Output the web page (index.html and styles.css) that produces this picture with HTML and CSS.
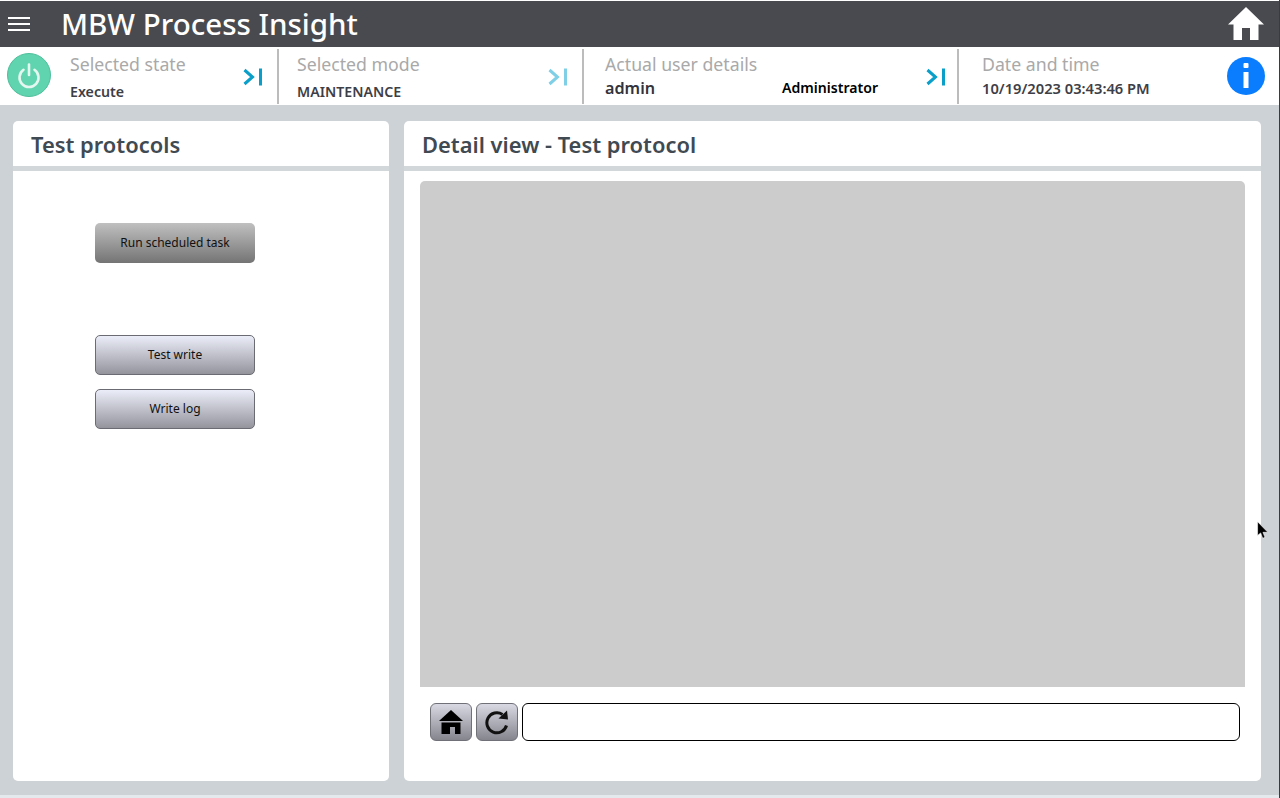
FILE: index.html
```html
<!DOCTYPE html>
<html lang="en">

<head>
    <meta charset="UTF-8">
    <title>MBW Process Insight</title>
    <link rel="stylesheet" href="styles.css">
</head>

<body>
    <div class="screen">
        <header class="topbar">
            <div class="burger"><span></span><span></span><span></span></div>
            <h1 class="app-title">MBW Process Insight</h1>
            <svg class="top-home" width="38" height="34" viewBox="0 0 38 34">
                <path fill="#fff" d="M19 0 L37 17.500 L31.500 17.500 L31.500 33 L23 33 L23 21 L15 21 L15 33 L6.500 33 L6.500 17.500 L1 17.500 Z" />
            </svg>
        </header>

        <section class="statusbar">
            <div class="status status-state">
                <div class="power">
                    <svg width="28" height="28" viewBox="0 0 28 28" fill="none" stroke="#e4f7f0" stroke-width="2.600" stroke-linecap="round">
                        <path d="M8.500 8.800 A9.500 9.500 0 1 0 19.500 8.800" />
                        <path d="M14 3.500 V14" />
                    </svg>
                </div>
                <div class="status-text">
                    <div class="status-label">Selected state</div>
                    <div class="status-value low">Execute</div>
                </div>
                <svg class="jump" width="20" height="18" viewBox="0 0 20 18" fill="none" stroke="#0a9fc9" stroke-width="3">
                    <path d="M1.500 2 L9.500 9 L1.500 16" />
                    <path d="M17.500 0.500 V17.500" />
                </svg>
            </div>

            <div class="status status-mode">
                <div class="status-text">
                    <div class="status-label">Selected mode</div>
                    <div class="status-value low">MAINTENANCE</div>
                </div>
                <svg class="jump" width="20" height="18" viewBox="0 0 20 18" fill="none" stroke="#7fd0e6" stroke-width="3">
                    <path d="M1.500 2 L9.500 9 L1.500 16" />
                    <path d="M17.500 0.500 V17.500" />
                </svg>
            </div>

            <div class="status status-user">
                <div class="status-text">
                    <div class="status-label">Actual user details</div>
                    <div class="user-row">
                        <span class="user-name">admin</span>
                        <span class="user-role">Administrator</span>
                    </div>
                </div>
                <svg class="jump" width="20" height="18" viewBox="0 0 20 18" fill="none" stroke="#0a9fc9" stroke-width="3">
                    <path d="M1.500 2 L9.500 9 L1.500 16" />
                    <path d="M17.500 0.500 V17.500" />
                </svg>
            </div>

            <div class="status status-date">
                <div class="status-text">
                    <div class="status-label">Date and time</div>
                    <div class="status-value date-value">10/19/2023 03:43:46 PM</div>
                </div>
                <div class="info">
                    <svg width="8" height="26" viewBox="0 0 8 26" fill="#fff">
                        <rect x="1.500" y="0" width="5" height="5" rx="1" />
                        <rect x="1.500" y="9" width="5" height="16" />
                    </svg>
                </div>
            </div>
        </section>

        <main class="content">
            <section class="panel panel-left">
                <h2 class="panel-title">Test protocols</h2>
                <div class="panel-body actions">
                    <button class="btn btn-dark">Run scheduled task</button>
                    <button class="btn btn-first">Test write</button>
                    <button class="btn">Write log</button>
                </div>
            </section>

            <section class="panel panel-right">
                <h2 class="panel-title">Detail view - Test protocol</h2>
                <div class="panel-body viewer">
                    <div class="browser-view"></div>
                    <div class="browser-nav">
                        <button class="nav-btn">
                            <svg width="24" height="24" viewBox="0 0 24 24" fill="#000">
                                <path d="M12 0 L24 11 L0 11 Z" />
                                <path d="M2.500 12.500 H21.500 V24 H16 V17 H11 V24 H2.500 Z" />
                            </svg>
                        </button>
                        <button class="nav-btn">
                            <svg width="26" height="26" viewBox="0 0 26 26" fill="none">
                                <path stroke="#111" stroke-width="3" d="M22.500 16.500 A10 10 0 1 1 18.500 5.500" />
                                <path fill="#111" d="M14.500 9.500 L24 10.500 L23 1.500 Z" />
                            </svg>
                        </button>
                        <div class="address"></div>
                    </div>
                </div>
            </section>
        </main>

        <div class="bottom-strip"></div>

        <!-- mouse pointer from the capture -->
        <svg class="cursor" width="12" height="18" viewBox="0 0 10.500 15.500">
            <path fill="#000" stroke="#fff" stroke-width="0.500" d="M0.500 0.500 L0.500 12.500 L3.200 10.300 L5 15 L7 14.200 L5.200 9.800 L9.500 9.800 Z" />
        </svg>
    </div>
</body>

</html>
```
FILE: styles.css
```css
* {
    margin: 0;
    padding: 0;
    box-sizing: border-box;
}

body {
    width: 1280px;
    height: 798px;
    overflow: hidden;
    background: #fff;
    font-family: "Noto Sans", "Open Sans", sans-serif;
}

.screen {
    position: relative;
    display: flex;
    flex-direction: column;
    height: 798px;
    border-right: 1px solid #3a3b40;
}

/* title bar */
.topbar {
    display: flex;
    align-items: center;
    height: 46px;
    margin-top: 1px;
    background: #494a4f;
    color: #fff;
}

.burger {
    display: flex;
    flex-direction: column;
    gap: 4px;
    width: 22px;
    margin-left: 8px;
}

.burger span {
    height: 2px;
    background: #fff;
}

.app-title {
    margin-left: 31px;
    font-size: 29.500px;
    font-weight: 500;
    line-height: 46px;
}

.top-home {
    margin-left: auto;
    margin-right: 14px;
}

/* state row */
.statusbar {
    display: grid;
    grid-template-columns: 279px 305px 375px 320px;
    height: 58px;
    background: #fff;
}

.status {
    display: flex;
    align-items: center;
    height: 55px;
    margin-top: 2px;
    border-right: 2px solid #bcbcbc;
}

.status-date {
    border-right: none;
}

.status-state {
    padding-left: 7px;
}

.status-mode {
    padding-left: 18px;
}

.status-user {
    padding-left: 21px;
}

.status-date {
    padding-left: 23px;
}

.power {
    display: flex;
    flex: none;
    align-items: center;
    justify-content: center;
    width: 44px;
    height: 44px;
    margin-right: 19px;
    margin-bottom: 3px;
    border: 1px solid #4fbf9c;
    border-radius: 50%;
    background: #5fd4ae;
}

.status-text {
    flex: 1;
    align-self: flex-start;
}

.status-label {
    margin-top: 3px;
    color: #a9a9a9;
    font-size: 17.700px;
    line-height: 24px;
}

.status-value {
    color: #3e3e46;
    font-size: 14.200px;
    font-weight: 600;
    line-height: 24px;
}

.status-value.low {
    margin-top: 4px;
}

.date-value {
    font-size: 14.700px;
}

.user-row {
    display: flex;
    line-height: 24px;
}

.user-name {
    width: 177px;
    color: #33333b;
    font-size: 16.200px;
    font-weight: 600;
}

.user-role {
    color: #000;
    font-size: 14.100px;
    font-weight: 600;
}

.jump {
    flex: none;
    margin-right: 14px;
}

.status-mode .jump {
    margin-right: 14px;
}

.status-user .jump {
    margin-right: 11px;
}

.info {
    display: flex;
    flex: none;
    align-items: center;
    justify-content: center;
    width: 38px;
    height: 38px;
    margin-right: 14px;
    margin-bottom: 2px;
    border-radius: 50%;
    background: #0a7dff;
}

/* panels */
.content {
    display: flex;
    flex: 1;
    gap: 15px;
    padding: 16px 18px 14px 13px;
    background: #cdd2d6;
}

.panel {
    display: flex;
    flex-direction: column;
    border-radius: 5px;
    background: #fff;
}

.panel-left {
    width: 376px;
}

.panel-right {
    flex: 1;
}

.panel-title {
    height: 50px;
    padding: 9px 18px 0;
    border-bottom: 5px solid #d2d7da;
    color: #3f4a52;
    font-size: 21.900px;
    font-weight: 600;
    line-height: 30px;
}

.panel-body {
    flex: 1;
}

.actions {
    display: flex;
    flex-direction: column;
    align-items: flex-start;
    gap: 14px;
    padding: 52px 0 0 82px;
}

.btn {
    width: 160px;
    height: 40px;
    padding-bottom: 2px;
    border: 1px solid #6b6b73;
    border-radius: 5px;
    background: linear-gradient(to bottom, #ebedf8, #94949d);
    color: #111;
    font-family: "Noto Sans", sans-serif;
    font-size: 12px;
}

.btn-dark {
    border: none;
    background: linear-gradient(to bottom, #c0c0c0, #747474);
}

.btn-first {
    margin-top: 58px;
}

/* embedded browser */
.viewer {
    display: flex;
    flex-direction: column;
    padding: 10px 16px 0;
}

.browser-view {
    height: 506px;
    border-radius: 5px 5px 0 0;
    background: #cccccc;
}

.browser-nav {
    display: flex;
    gap: 4px;
    height: 38px;
    margin-top: 16px;
    padding: 0 5px 0 10px;
}

.nav-btn {
    display: flex;
    align-items: center;
    justify-content: center;
    width: 42px;
    height: 38px;
    border: 1px solid #707078;
    border-radius: 6px;
    background: linear-gradient(to bottom, #d8d9e2, #85858e);
}

.address {
    flex: 1;
    border: 1.500px solid #000;
    border-radius: 6px;
    background: #fff;
}

.bottom-strip {
    height: 3px;
    background: #e4e9ee;
}

.cursor {
    position: absolute;
    top: 521px;
    left: 1257px;
}
```
